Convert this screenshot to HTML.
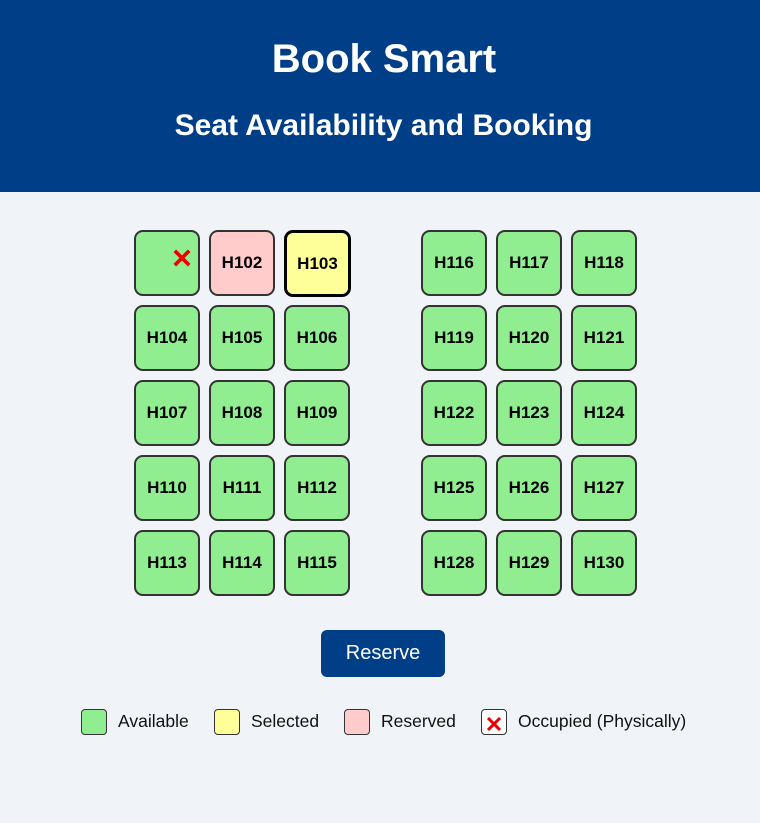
<!DOCTYPE html>
<html><head><style>
body{margin:0;width:760px;height:823px;background:#f0f4f8;font-family:"Liberation Sans",sans-serif;position:relative;overflow:hidden}
.hd{position:absolute;left:0;top:0;width:760px;height:192px;background:#003f87;color:#fff;text-align:center}
.hd h1{position:absolute;top:36px;left:8px;right:0;margin:0;font-size:40px;line-height:46px}
.hd h2{position:absolute;top:108px;left:7px;right:0;margin:0;font-size:30px;line-height:36px}
.s{position:absolute;width:62px;height:62px;border:2px solid #333;border-radius:9px;background:#90ee90;box-sizing:content-box;display:flex;align-items:center;justify-content:center;font-weight:bold;font-size:17px;color:#000}
.r{background:#ffcccb}
.y{background:#ffff99;border:3px solid #000;width:61px;height:61px}
.btn{position:absolute;left:321px;top:630px;width:124px;height:47px;background:#003f87;color:#fff;border-radius:6px;font-size:20px;display:flex;align-items:center;justify-content:center}
.lb{position:absolute;top:709px;width:24px;height:24px;border:1px solid #333;border-radius:4px}
.lt{position:absolute;top:711px;font-size:17.5px;color:#111}
</style></head><body>
<div class="hd"><h1>Book Smart</h1><h2>Seat Availability and Booking</h2></div>
<div class="s" style="left:134px;top:230px"><svg width="18" height="18" style="position:absolute;left:37px;top:17px" viewBox="0 0 20 20"><path d="M2 2L18 18M18 2L2 18" stroke="#e00" stroke-width="4"/></svg></div>
<div class="s r" style="left:209px;top:230px">H102</div>
<div class="s y" style="left:284px;top:230px">H103</div>
<div class="s" style="left:421px;top:230px">H116</div>
<div class="s" style="left:496px;top:230px">H117</div>
<div class="s" style="left:571px;top:230px">H118</div>
<div class="s" style="left:134px;top:305px">H104</div><div class="s" style="left:209px;top:305px">H105</div><div class="s" style="left:284px;top:305px">H106</div>
<div class="s" style="left:421px;top:305px">H119</div><div class="s" style="left:496px;top:305px">H120</div><div class="s" style="left:571px;top:305px">H121</div>
<div class="s" style="left:134px;top:380px">H107</div><div class="s" style="left:209px;top:380px">H108</div><div class="s" style="left:284px;top:380px">H109</div>
<div class="s" style="left:421px;top:380px">H122</div><div class="s" style="left:496px;top:380px">H123</div><div class="s" style="left:571px;top:380px">H124</div>
<div class="s" style="left:134px;top:455px">H110</div><div class="s" style="left:209px;top:455px">H111</div><div class="s" style="left:284px;top:455px">H112</div>
<div class="s" style="left:421px;top:455px">H125</div><div class="s" style="left:496px;top:455px">H126</div><div class="s" style="left:571px;top:455px">H127</div>
<div class="s" style="left:134px;top:530px">H113</div><div class="s" style="left:209px;top:530px">H114</div><div class="s" style="left:284px;top:530px">H115</div>
<div class="s" style="left:421px;top:530px">H128</div><div class="s" style="left:496px;top:530px">H129</div><div class="s" style="left:571px;top:530px">H130</div>
<div class="btn">Reserve</div>
<div class="lb" style="left:81px;background:#90ee90"></div><div class="lt" style="left:118px">Available</div>
<div class="lb" style="left:214px;background:#ffff99"></div><div class="lt" style="left:251px">Selected</div>
<div class="lb" style="left:344px;background:#ffcccb"></div><div class="lt" style="left:381px">Reserved</div>
<div class="lb" style="left:481px;background:#fff"><svg width="14" height="14" style="position:absolute;left:5px;top:7px" viewBox="0 0 14 14"><path d="M1 1L13 13M13 1L1 13" stroke="#e00" stroke-width="3"/></svg></div><div class="lt" style="left:518px">Occupied (Physically)</div>
</body></html>
